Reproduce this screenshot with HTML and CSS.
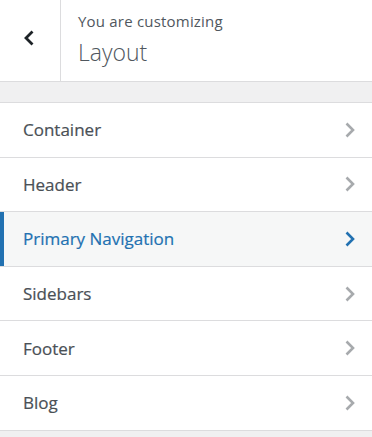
FILE: index.html
```html
<!DOCTYPE html>
<html>
<head>
<meta charset="utf-8">
<link rel="stylesheet" href="styles.css">
</head>
<body>
<div class="panel">
  <div class="head">
    <button class="back" aria-label="Back">
      <svg width="14" height="18" viewBox="0 0 14 18"><path d="M10.5 2.5 L4 9 L10.5 15.5" fill="none" stroke="#1d2327" stroke-width="2.8"/></svg>
    </button>
    <div class="title">
      <span class="sub">You are customizing</span>
      <span class="name">Layout</span>
    </div>
  </div>
  <div class="gap"></div>
  <ul class="list">
    <li class="item"><span>Container</span><svg class="chev" viewBox="0 0 12 18"><path d="M3 2.5 L9.5 9 L3 15.5" fill="none" stroke-width="2.6"/></svg></li>
    <li class="item"><span>Header</span><svg class="chev" viewBox="0 0 12 18"><path d="M3 2.5 L9.5 9 L3 15.5" fill="none" stroke-width="2.6"/></svg></li>
    <li class="item active"><span>Primary Navigation</span><svg class="chev" viewBox="0 0 12 18"><path d="M3 2.5 L9.5 9 L3 15.5" fill="none" stroke-width="2.6"/></svg></li>
    <li class="item"><span>Sidebars</span><svg class="chev" viewBox="0 0 12 18"><path d="M3 2.5 L9.5 9 L3 15.5" fill="none" stroke-width="2.6"/></svg></li>
    <li class="item"><span>Footer</span><svg class="chev" viewBox="0 0 12 18"><path d="M3 2.5 L9.5 9 L3 15.5" fill="none" stroke-width="2.6"/></svg></li>
    <li class="item"><span>Blog</span><svg class="chev" viewBox="0 0 12 18"><path d="M3 2.5 L9.5 9 L3 15.5" fill="none" stroke-width="2.6"/></svg></li>
  </ul>
</div>
</body>
</html>
```
FILE: styles.css
```css
html, body {
  margin: 0;
  padding: 0;
  background: #f0f0f1;
  font-family: "Open Sans", "Noto Sans", sans-serif;
}
.panel {
  width: 372px;
  height: 437px;
  background: #f0f0f1;
  overflow: hidden;
}
.head {
  display: flex;
  height: 81px;
  background: #fff;
  border-bottom: 1px solid #dcdcde;
}
.back {
  width: 61px;
  border: 0;
  border-right: 1px solid #dcdcde;
  background: #fff;
  display: flex;
  align-items: center;
  justify-content: center;
  padding: 0 2px 6px 0;
}
.title {
  display: flex;
  flex-direction: column;
  padding: 11px 0 0 17px;
}
.sub {
  font-size: 15px;
  color: #50575e;
  line-height: 21px;
  letter-spacing: 0.2px;
}
.name {
  font-size: 23px;
  font-weight: 300;
  color: #50575e;
  line-height: 30px;
  margin-top: 5px;
}
.gap {
  height: 20px;
}
.list {
  list-style: none;
  margin: 0;
  padding: 0;
  border-bottom: 1px solid #dcdcde;
}
.item {
  display: flex;
  align-items: center;
  justify-content: space-between;
  height: 53.6px;
  border-top: 1px solid #dcdcde;
  background: #fff;
  padding: 0 16px 0 23px;
  font-size: 17px;
  color: #4a5056;
  -webkit-text-stroke: 0.2px currentColor;
}
.item .chev {
  width: 13px;
  height: 18px;
  stroke: #a7aaad;
}
.item.active {
  background: #f6f7f7;
  color: #2271b1;
  box-shadow: inset 4px 0 0 #2271b1;
}
.item.active .chev {
  stroke: #2271b1;
}
```
